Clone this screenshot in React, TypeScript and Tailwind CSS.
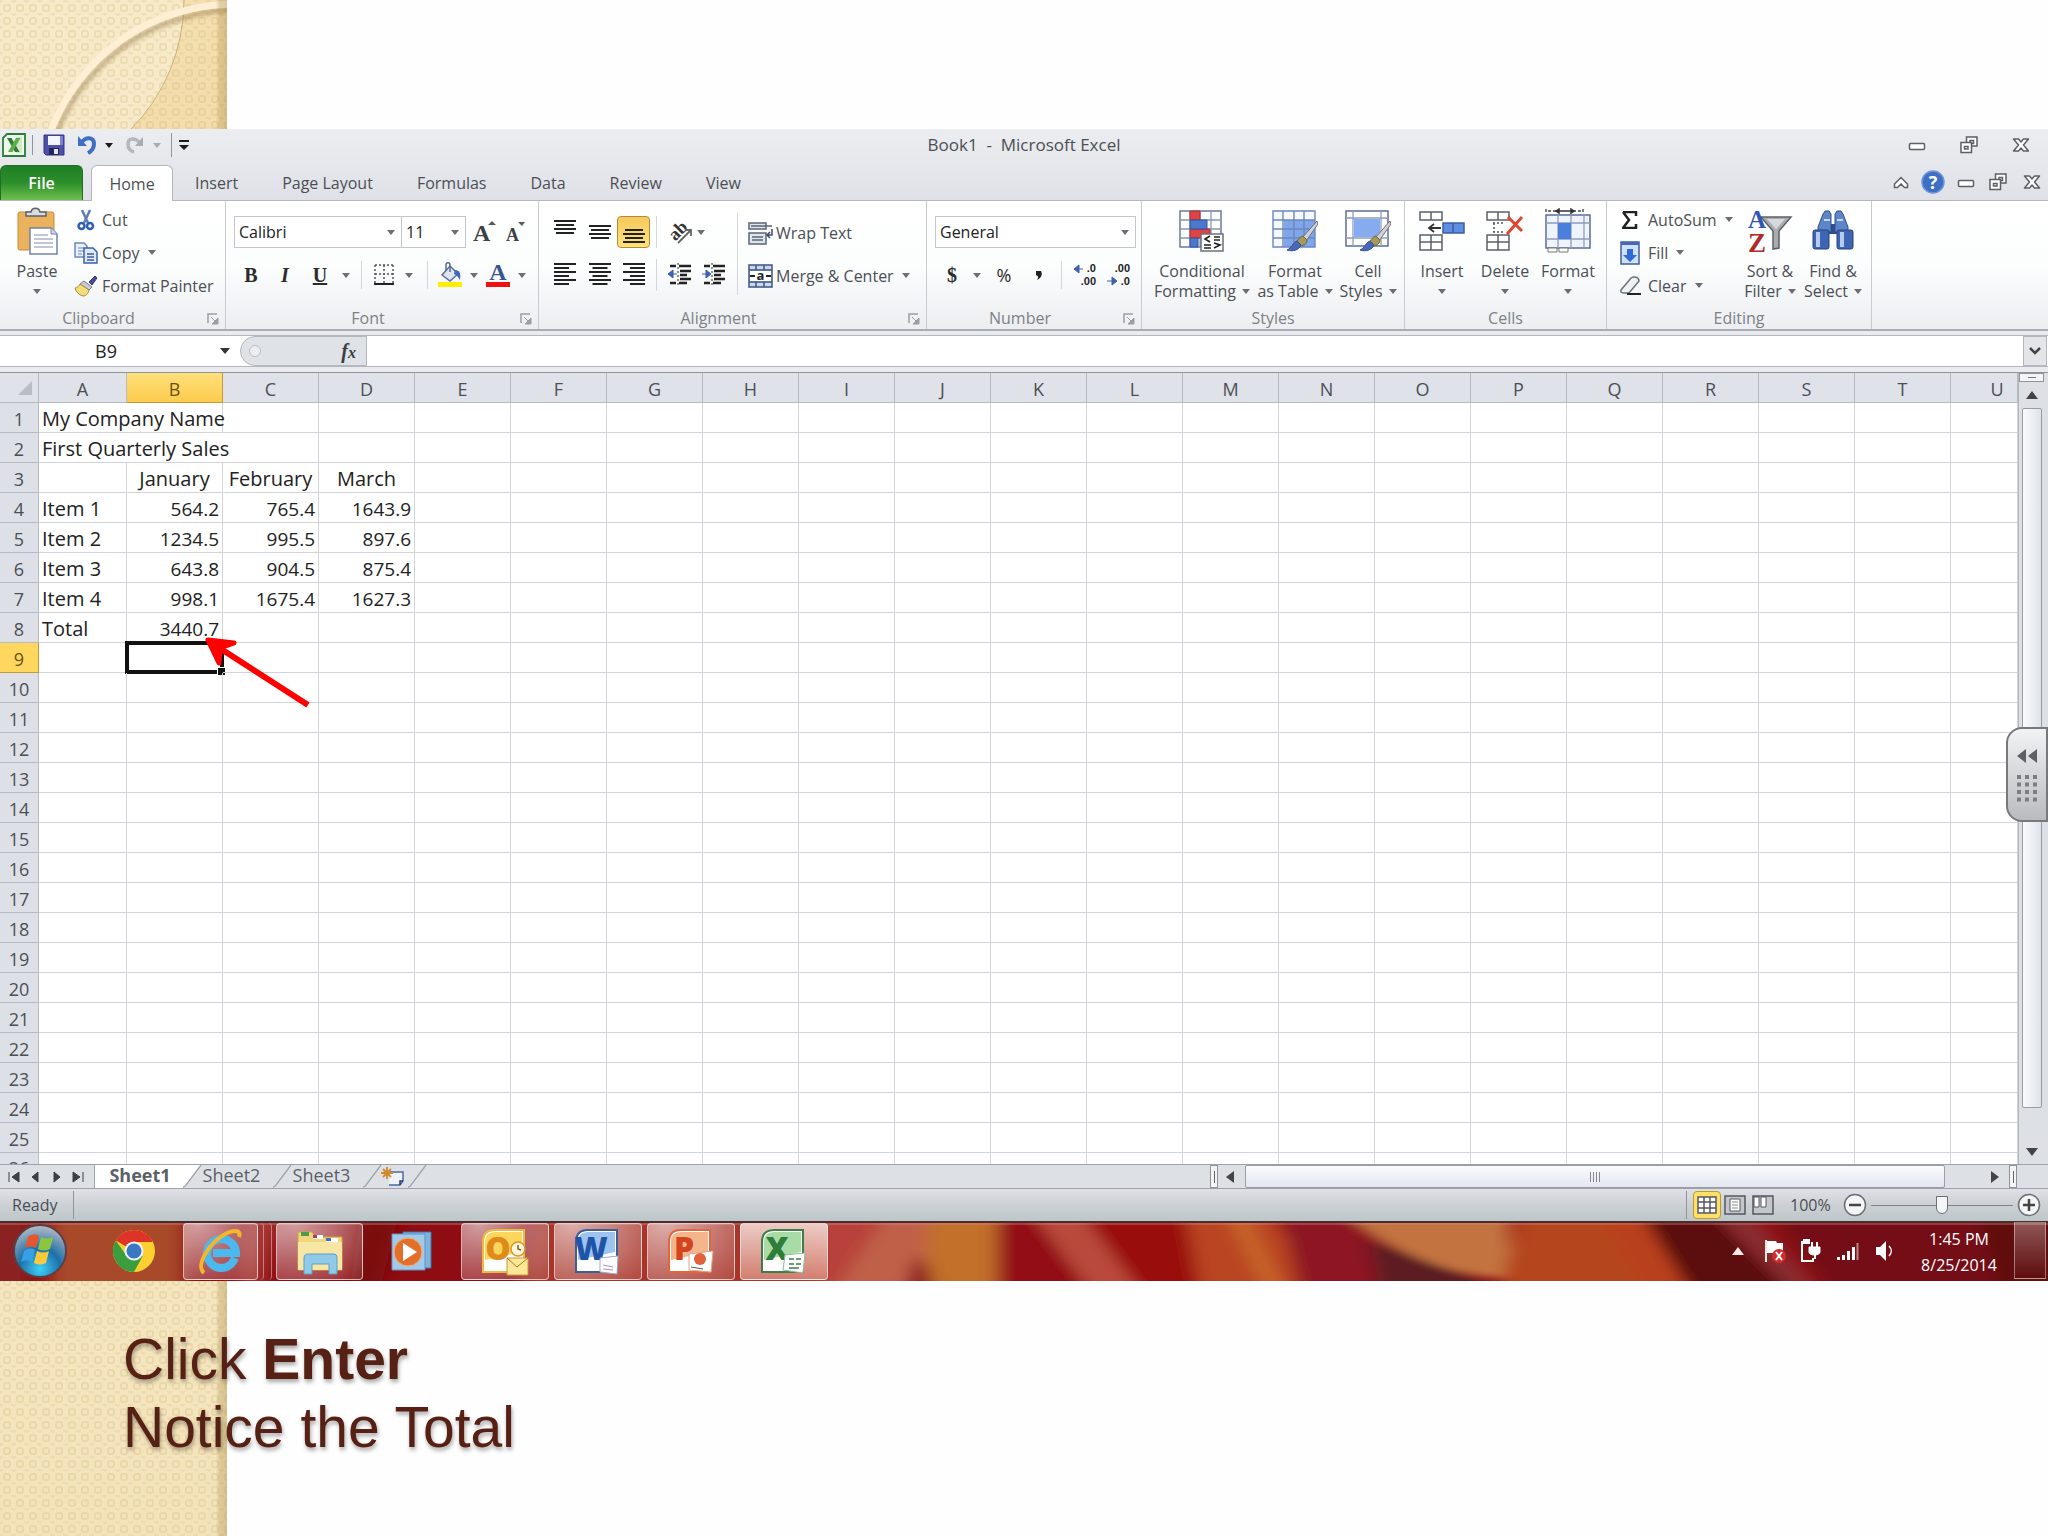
import type { ReactNode } from "react";
import clsx from "clsx";

const columns = "ABCDEFGHIJKLMNOPQRSTU".split("");
const tabs = ["Insert", "Page Layout", "Formulas", "Data", "Review", "View"];

interface CellData {
  text: string;
  span?: number;
  align?: "left" | "center" | "right";
}

const num = (text: string): CellData => ({ text, align: "right" });
const mid = (text: string): CellData => ({ text, align: "center" });

const sheet: Record<number, CellData[]> = {
  1: [{ text: "My Company Name", span: 2 }],
  2: [{ text: "First Quarterly Sales", span: 3 }],
  3: [{ text: "" }, mid("January"), mid("February"), mid("March")],
  4: [{ text: "Item 1" }, num("564.2"), num("765.4"), num("1643.9")],
  5: [{ text: "Item 2" }, num("1234.5"), num("995.5"), num("897.6")],
  6: [{ text: "Item 3" }, num("643.8"), num("904.5"), num("875.4")],
  7: [{ text: "Item 4" }, num("998.1"), num("1675.4"), num("1627.3")],
  8: [{ text: "Total" }, num("3440.7")],
};

function Caret({ className = "text-[#6b6f75]" }: { className?: string }) {
  return (
    <svg viewBox="0 0 8 5" className={clsx("w-2 h-[5px] shrink-0", className)} aria-hidden="true">
      <path d="M0 0h8L4 5z" fill="currentColor" />
    </svg>
  );
}

function Sep({ className = "h-8", dark }: { className?: string; dark?: boolean }) {
  return <span className={clsx("w-px shrink-0", dark ? "bg-[#8f949c]" : "bg-[#d3d6db]", className)} />;
}

/* ---------- slide background ---------- */

function SlideStrip() {
  return (
    <svg className="absolute left-0 top-0 h-full w-[227px]" aria-hidden="true">
      <defs>
        <pattern id="weave" width="13" height="13" patternUnits="userSpaceOnUse">
          <rect x="4" y="5" width="6" height="6" rx="2" fill="none" stroke="#c9a860" strokeOpacity=".22" strokeWidth="2" />
          <path d="M0 1h3M11 1h2M1 0v3" stroke="#c9a860" strokeOpacity=".15" strokeWidth="2" />
        </pattern>
        <linearGradient id="strip" x1="0" x2="0" y1="0" y2="1">
          <stop offset="0" stopColor="#f3dfb0" />
          <stop offset=".1" stopColor="#f4dcab" />
          <stop offset=".85" stopColor="#f5e6c0" />
          <stop offset="1" stopColor="#f3e3bb" />
        </linearGradient>
        <linearGradient id="stripEdge" x1="0" x2="1">
          <stop offset="0" stopColor="#a98a45" stopOpacity="0" />
          <stop offset=".3" stopColor="#a98a45" stopOpacity=".3" />
          <stop offset="1" stopColor="#a98a45" stopOpacity=".36" />
        </linearGradient>
        <filter id="soft" x="-10%" y="-10%" width="120%" height="120%">
          <feGaussianBlur stdDeviation="2" />
        </filter>
      </defs>
      <rect width="227" height="100%" fill="url(#strip)" />
      <circle cx="0" cy="0" r="184" fill="#f8ecd0" fillOpacity=".8" stroke="#c9b27c" strokeWidth="1" />
      <rect width="227" height="100%" fill="url(#weave)" />
      <circle cx="237" cy="204" r="194" fill="none" stroke="#8f7340" strokeOpacity=".5" strokeWidth="5" filter="url(#soft)" />
      <circle cx="235" cy="201" r="197" fill="none" stroke="#fdeed4" strokeWidth="7" />
      <rect x="216" width="11" height="100%" fill="url(#stripEdge)" />
    </svg>
  );
}

/* ---------- window chrome ---------- */

function MinimizeIcon() {
  return (
    <svg viewBox="0 0 18 18" className="size-[18px]">
      <rect x="1.5" y="7.5" width="15" height="6" rx="1" fill="#fff" stroke="#5b5f66" strokeWidth="1.5" />
    </svg>
  );
}

function RestoreIcon() {
  return (
    <svg viewBox="0 0 18 18" className="size-[18px]" fill="#fff" stroke="#5b5f66" strokeWidth="1.5">
      <path d="M6.500 1h10.500v9h-10.500z" />
      <path d="M10 4.500h3.500v3h-3.500z" />
      <path d="M1 6.500h10.500v10h-10.500z" />
      <path d="M4.500 10.500h3.500v2.500h-3.500z" />
    </svg>
  );
}

function CloseIcon() {
  return (
    <svg viewBox="0 0 18 18" className="size-[18px]">
      <path
        d="M1.500 3h5L9 6l2.500-3h5l-5 6 5 6h-5L9 12l-2.500 3h-5l5-6z"
        fill="#fff"
        stroke="#5b5f66"
        strokeWidth="1.5"
        strokeLinejoin="round"
      />
    </svg>
  );
}

function TitleBar() {
  return (
    <div className="relative flex h-9 items-center pb-1">
      <svg viewBox="0 0 24 24" className="ml-[2px] h-6 w-6" aria-hidden="true">
        <path d="M1 5l4-4h18v22H1z" fill="#eef7ea" stroke="#2c7d3a" strokeWidth="1.800" />
        <rect x="14" y="4" width="6" height="16" fill="#cfe8c6" />
        <path d="M5 5h4.500l8 14H13z" fill="#2e7d36" />
        <path d="M14 5h4.500l-8 14H6z" fill="#5fae4a" />
      </svg>
      <Sep dark className="ml-[6px] h-5" />
      <button aria-label="Save" className="ml-[10px]">
        <svg viewBox="0 0 22 22" className="size-[22px]">
          <path d="M1 1h20v20H3l-2-2z" fill="#4d4fa8" stroke="#34357d" />
          <path d="M5 2h12v9H5z" fill="#f3f6fd" />
          <path d="M17 2h3v9h-3z" fill="#7d80cf" />
          <path d="M6 14h10v7H6z" fill="#23245e" />
          <path d="M11 15h4v5h-4z" fill="#e4e7f5" />
        </svg>
      </button>
      <button aria-label="Undo" className="ml-3 flex items-center gap-2">
        <svg viewBox="0 0 20 22" className="h-[22px] w-5">
          <path d="M4 9c5-7 13-6 13 1 0 4-2 7-6 9" fill="none" stroke="#3f6fc4" strokeWidth="4" />
          <path d="M1 2v10h9z" fill="#3f6fc4" />
        </svg>
        <Caret className="text-[#1b1b1b]" />
      </button>
      <button aria-label="Redo" className="ml-3 flex items-center gap-2">
        <svg viewBox="0 0 20 22" className="h-[22px] w-5">
          <path d="M15 9C10 3 3 4 3 10c0 4 2 7 6 8" fill="none" stroke="#b4b7bc" strokeWidth="3.500" />
          <path d="M18 3v9h-8z" fill="#a9acb1" />
        </svg>
        <Caret className="text-[#a9acb1]" />
      </button>
      <Sep dark className="ml-[10px] h-6" />
      <button aria-label="Customize Quick Access Toolbar" className="ml-[6px]">
        <svg viewBox="0 0 12 12" className="size-3">
          <path d="M1 1h10v2H1zM1 6h10l-5 5z" fill="#1b1b1b" />
        </svg>
      </button>
      <h1 className="pointer-events-none absolute inset-x-0 text-center text-[17px] whitespace-pre text-[#4b4f55]">
        Book1  -  Microsoft Excel
      </h1>
      <div className="ml-auto flex items-center gap-[34px] pr-[18px]">
        <button aria-label="Minimize"><MinimizeIcon /></button>
        <button aria-label="Restore"><RestoreIcon /></button>
        <button aria-label="Close"><CloseIcon /></button>
      </div>
    </div>
  );
}

function TabBar() {
  return (
    <nav className="flex h-9 items-end border-b border-[#b4b8be] text-base text-[#4b4f55]">
      <button className="h-[35px] w-[83px] rounded-t-md border border-b-0 border-[#1f6e22] bg-linear-to-b from-[#1f7f25] via-[#2c8f2b] to-[#6cc04e] font-semibold text-white">
        File
      </button>
      <button className="relative top-px ml-2 h-9 w-[82px] rounded-t-md border border-b-0 border-[#b4b8be] bg-white">
        Home
      </button>
      {tabs.map((tab) => (
        <button key={tab} className="h-[35px] px-[22px]">
          {tab}
        </button>
      ))}
      <div className="ml-auto flex h-full items-center pr-[7px] pb-[2px]">
        <button aria-label="Minimize the Ribbon">
          <svg viewBox="0 0 16 14" className="h-[14px] w-4">
            <path d="M1.500 9L8 2.500 14.500 9v3.500h-3L8 9l-3.500 3.500h-3z" fill="#fff" stroke="#5b5f66" strokeWidth="1.500" />
          </svg>
        </button>
        <button aria-label="Help" className="ml-3">
          <svg viewBox="0 0 24 24" className="size-6">
            <circle cx="12" cy="12" r="11" fill="#3d6fc2" stroke="#6d97da" strokeWidth="1.500" />
            <text x="12" y="18.500" textAnchor="middle" fontSize="18" fontWeight="700" fill="#fff">?</text>
          </svg>
        </button>
        <button aria-label="Minimize Window" className="ml-3"><MinimizeIcon /></button>
        <button aria-label="Restore Window" className="ml-[14px]"><RestoreIcon /></button>
        <button aria-label="Close Window" className="ml-4"><CloseIcon /></button>
      </div>
    </nav>
  );
}

/* ---------- ribbon ---------- */

interface GroupProps {
  label: string;
  className: string;
  inset?: string;
  launcher?: boolean;
  children: ReactNode;
}

function Group({ label, className, inset, launcher, children }: GroupProps) {
  return (
    <section className={clsx("flex shrink-0 flex-col border-r border-[#c8ccd2]", className)}>
      <div className={clsx("flex h-[103px]", inset)}>{children}</div>
      <div className={clsx("relative flex h-[25px] items-center justify-center pt-[2px] text-base text-[#7d8188]", launcher && "pr-7")}>
        {label}
        {launcher && (
          <button aria-label={`${label} settings`} className="absolute right-[6px] bottom-1">
            <svg viewBox="0 0 12 12" className="size-3">
              <path d="M1 10V1h9" fill="none" stroke="#9a9ea5" strokeWidth="1.500" />
              <path d="M4 4l4 4M11 5v6H5z" fill="#9a9ea5" stroke="#9a9ea5" />
            </svg>
          </button>
        )}
      </div>
    </section>
  );
}

interface SmallButtonProps {
  icon: ReactNode;
  label: string;
  menu?: boolean;
}

function SmallButton({ icon, label, menu }: SmallButtonProps) {
  return (
    <button className="flex h-[33px] items-center whitespace-nowrap">
      <span className="flex w-7 justify-start">{icon}</span>
      {label}
      {menu && <span className="pl-2"><Caret /></span>}
    </button>
  );
}

interface BigButtonProps {
  icon: ReactNode;
  lines: string[];
  className: string;
}

// A single-line label keeps its arrow on the second line.
function BigButton({ icon, lines, className }: BigButtonProps) {
  return (
    <button className={clsx("flex flex-col items-center whitespace-nowrap", className)}>
      <span className="flex h-[60px] items-center">{icon}</span>
      <span className="leading-5">{lines[0]}</span>
      <span className="flex h-5 items-center gap-[6px]">
        {lines[1]}
        <Caret />
      </span>
    </button>
  );
}

interface PickerProps {
  label: string;
  value: string;
  className: string;
}

function Picker({ label, value, className }: PickerProps) {
  return (
    <label className={clsx("relative flex items-center", className)}>
      <span className="sr-only">{label}</span>
      <select className="h-8 w-full appearance-none border border-[#c3c7cd] bg-white pl-1 text-[#222]">
        <option>{value}</option>
      </select>
      <span className="pointer-events-none absolute right-[7px]"><Caret /></span>
    </label>
  );
}

function Tool({ label, className, children }: { label: string; className: string; children: ReactNode }) {
  return (
    <button aria-label={label} title={label} className={clsx("flex h-8 shrink-0 items-center justify-center", className)}>
      {children}
    </button>
  );
}

const PasteIcon = (
  <svg viewBox="0 0 42 48" className="h-12 w-[42px]">
    <rect x="2" y="5" width="36" height="38" rx="2" fill="#eab25c" stroke="#c58b39" />
    <path d="M10 9V5h5c1-5 8-5 9 0h6v4z" fill="#d9dce1" stroke="#5d6168" strokeWidth="1.500" />
    <path d="M14 21h21l6 6v20H14z" fill="#fff" stroke="#7383a8" strokeWidth="1.500" />
    <path d="M35 21v6h6" fill="#cfd8ee" stroke="#7383a8" />
    <path d="M18 28h14M18 32h19M18 36h19M18 40h19" stroke="#a9b4cc" strokeWidth="1.500" />
  </svg>
);

const CutIcon = (
  <svg viewBox="0 0 22 22" className="ml-[3px] size-[22px]">
    <path d="M5 1l6 13M13 1L7 14" stroke="#5d7fae" strokeWidth="2.500" />
    <circle cx="4.500" cy="17" r="3" fill="none" stroke="#2f5fb0" strokeWidth="2.500" />
    <circle cx="13" cy="17" r="3" fill="none" stroke="#2f5fb0" strokeWidth="2.500" />
  </svg>
);

const CopyIcon = (
  <svg viewBox="0 0 24 22" className="h-[22px] w-6">
    <path d="M1 1h9l3 3v11H1z" fill="#e9f0fb" stroke="#6b87bb" strokeWidth="1.500" />
    <path d="M4 6h6M4 9h6M4 12h4" stroke="#6b87bb" />
    <path d="M10 6h9l4 4v11H10z" fill="#dfe9fa" stroke="#3c62a8" strokeWidth="1.500" />
    <path d="M13 12h7M13 15h7M13 18h7" stroke="#3c62a8" strokeWidth="1.300" />
  </svg>
);

const PainterIcon = (
  <svg viewBox="0 0 24 22" className="h-[22px] w-6">
    <path d="M15 7l6-6 2 2-5 7z" fill="#4b4d92" stroke="#33346b" />
    <path d="M10 6l8 6-3 3-9-6z" fill="#c9ccd3" stroke="#777c85" />
    <path d="M6 9l9 6c-1 4-3 6-6 6-4-1-7-4-8-8 2 0 4-2 5-4z" fill="#f2dc7c" stroke="#a8913a" />
  </svg>
);

function BarLines({ widths, top = 0, align = "center" }: { widths: number[]; top?: number; align?: "start" | "center" | "end" }) {
  return (
    <svg viewBox="0 0 22 24" className="h-6 w-[22px]">
      {widths.map((w, i) => (
        <rect
          key={i}
          x={align === "start" ? 0 : align === "end" ? 22 - w : (22 - w) / 2}
          y={top + i * 4}
          width={w}
          height="2"
          fill="#222"
        />
      ))}
    </svg>
  );
}

function IndentIcon({ flip }: { flip?: boolean }) {
  return (
    <svg viewBox="0 0 24 24" className="h-6 w-6">
      <path d="M2 3h6M11 3h12M12 8h11M12 12h7M12 16h11M2 20h6M11 20h8" stroke="#222" strokeWidth="2.500" />
      <path d="M10 0v24" stroke="#222" strokeDasharray="2 2" />
      <path d={flip ? "M0 11h4M4 7l5 4-5 4z" : "M9 11H5M5 7l-5 4 5 4z"} fill="#3f5fb0" stroke="#3f5fb0" />
    </svg>
  );
}

const brush = (
  <g>
    <path d="M45 12L30 29l4 3 12-17z" fill="#cfd2d6" stroke="#70747a" />
    <path d="M31 27c-3 1-5 3-6 6l4 4c4-1 6-3 6-6z" fill="#a59a5a" stroke="#6d6638" />
    <path d="M25 32c-4 1-5 7-10 9 6 2 12 0 14-5z" fill="#4a68b5" stroke="#34508f" />
  </g>
);

const ConditionalIcon = (
  <svg viewBox="0 0 46 44" className="h-11 w-[46px]">
    <path d="M1 2h41v36H1z" fill="#fff" stroke="#6b7a99" strokeWidth="1.500" />
    <path d="M1 11h41M1 20h41M1 29h41M11 2v36M21 2v36M32 2v36" stroke="#8797b8" strokeWidth="1.300" />
    <path d="M11 2h10v9H11zM11 20h20v9H11z" fill="#df4343" stroke="#a82f2f" />
    <path d="M11 11h17v9H11zM11 29h8v9h-8z" fill="#4a78cf" stroke="#2f529b" />
    <path d="M22 25h22v17H22z" fill="#fff" stroke="#6b7079" strokeWidth="1.500" />
    <path d="M31 27l-5 3 5 3M25 36h7M25 39h7M35 28h6M35 31h6M35 34l6 2-6 3" fill="none" stroke="#222" strokeWidth="1.600" />
  </svg>
);

const TableIcon = (
  <svg viewBox="0 0 46 44" className="h-11 w-[46px]">
    <path d="M1 2h42v36H1z" fill="#f5f8fe" />
    <path d="M12 11h31v27H12z" fill="#7fa5ea" />
    <path d="M1 2h42v36H1zM1 11h42M1 20h42M1 29h42M11 2v36M22 2v36M32 2v36" fill="none" stroke="#6c87bd" strokeWidth="1.400" />
    {brush}
  </svg>
);

const CellStylesIcon = (
  <svg viewBox="0 0 46 44" className="h-11 w-[46px]">
    <path d="M1 2h42v35H1z" fill="#fff" stroke="#5d6f95" strokeWidth="1.500" />
    <path d="M1 9h42M1 29h42M8 2v35M36 2v35" stroke="#8e9dbd" strokeWidth="1.300" />
    <path d="M9 10h26v18H9z" fill="#86abee" />
    {brush}
  </svg>
);

const InsertIcon = (
  <svg viewBox="0 0 46 44" className="h-11 w-[46px]">
    <path d="M1 3h22v8H1zM12 3v8M1 26h22v15H1zM12 26v15M1 33h22" fill="#fff" stroke="#5b606b" strokeWidth="1.500" />
    <path d="M24 14h21v10H24zM34 14v10" fill="#5f8ee0" stroke="#3b5ea8" strokeWidth="1.500" />
    <path d="M10 19h12M15 15l-5 4 5 4" fill="none" stroke="#333" strokeWidth="1.800" />
  </svg>
);

const DeleteIcon = (
  <svg viewBox="0 0 46 44" className="h-11 w-[46px]">
    <path d="M5 3h22v8H5zM16 3v8M5 26h22v15H5zM16 26v15M5 33h22" fill="#fff" stroke="#5b606b" strokeWidth="1.500" />
    <path d="M11 14h12M11 23h12M12 14v9" stroke="#555" strokeWidth="1.500" strokeDasharray="2 2" />
    <path d="M26 8l14 14M40 8L25 25" stroke="#e2452f" strokeWidth="3" />
  </svg>
);

const FormatIcon = (
  <svg viewBox="0 0 46 46" className="h-[46px] w-[46px]">
    <path d="M1 1v4M38 1v4M3 3h8M28 3h8" stroke="#444" strokeWidth="1.400" strokeDasharray="3 2" />
    <path d="M12 3h16M14 1l-3 2 3 2zM26 1l3 2-3 2z" stroke="#333" strokeWidth="1.500" />
    <path d="M1 7h44v33H1z" fill="#eef3fc" stroke="#5d6f95" strokeWidth="1.500" />
    <path d="M1 15h44M1 31h44M13 7v33M26 7v33M39 7v33" stroke="#8e9dbd" strokeWidth="1.300" />
    <path d="M13 15h13v16H13z" fill="#4a7fdd" />
    <path d="M3 40h9v4H3zM14 40h9v4h-9z" fill="#fff" stroke="#777" />
  </svg>
);

const SortIcon = (
  <svg viewBox="0 0 44 46" className="h-[46px] w-11 overflow-visible">
    <path d="M13 9h30L31 23v17l-6 1V23z" fill="#a9adb2" stroke="#5d6167" strokeWidth="1.500" />
    <path d="M19 11h18l-9 10z" fill="#d6d9dc" />
    <text x="0" y="20" fontSize="25" fontWeight="700" fill="#2f55b5" className="font-['Liberation_Serif',serif]">A</text>
    <text x="0" y="44" fontSize="27" fontWeight="700" fill="#b02a2a" className="font-['Liberation_Serif',serif]">Z</text>
  </svg>
);

const FindIcon = (
  <svg viewBox="0 0 42 42" className="h-[42px] w-[42px]">
    <path d="M17 14h8v10h-8z" fill="#2f4f8c" />
    {[0, 24].map((x) => (
      <g key={x}>
        <path d={x ? "M23 4l2-3h4l2 3 5 13v5H23z" : "M6 22v-5l5-13 2-3h4l2 3v18z"} fill="#5f85c9" stroke="#2f4f8c" />
        <rect x={x + 1} y="20" width="16" height="19" rx="2" fill="#3c66b4" stroke="#24437c" />
        <rect x={x + 4} y="22" width="4" height="15" fill="#b7cbee" />
      </g>
    ))}
    <path d="M12 10h6M25 10h6" stroke="#c5d5f2" strokeWidth="2" />
  </svg>
);

function Ribbon() {
  return (
    <div className="flex border-b-2 border-[#a9adb4] bg-linear-to-b from-white via-[#fcfdfd] to-[#eceef1] text-base text-[#4b4f55]">
      <Group label="Clipboard" className="w-[226px]" launcher>
        <BigButton icon={PasteIcon} lines={["Paste"]} className="w-[74px]" />
        <div className="flex flex-col items-start pt-[2px]">
          <SmallButton icon={CutIcon} label="Cut" />
          <SmallButton icon={CopyIcon} label="Copy" menu />
          <SmallButton icon={PainterIcon} label="Format Painter" />
        </div>
      </Group>

      <Group label="Font" className="w-[313px]" launcher>
        <div className="flex flex-col gap-[11px] pt-[15px] pl-2">
          <div className="flex">
            <Picker label="Font" value="Calibri" className="w-[168px]" />
            <Picker label="Font size" value="11" className="-ml-px w-[65px]" />
            <Tool label="Grow font" className="ml-[6px] w-[26px]">
              <svg viewBox="0 0 24 24" className="size-6 overflow-visible">
                <text x="0" y="21" fontSize="24" fontWeight="700" fill="#3b3f46" className="font-['Liberation_Serif',serif]">A</text>
                <path d="M15 5l4-4 4 4z" fill="#555a62" />
              </svg>
            </Tool>
            <Tool label="Shrink font" className="ml-[6px] w-[26px]">
              <svg viewBox="0 0 24 24" className="size-6 overflow-visible">
                <text x="1" y="21" fontSize="18" fontWeight="700" fill="#3b3f46" className="font-['Liberation_Serif',serif]">A</text>
                <path d="M13 2h7l-3 4z" fill="#555a62" />
              </svg>
            </Tool>
          </div>
          <div className="flex items-center font-['Liberation_Serif',serif] text-xl font-bold text-[#2b2b2b]">
            <Tool label="Bold" className="w-[34px]">B</Tool>
            <Tool label="Italic" className="w-[34px]"><i>I</i></Tool>
            <Tool label="Underline" className="w-9"><u>U</u></Tool>
            <Tool label="Underline style" className="w-4"><Caret /></Tool>
            <Sep className="mx-[7px] h-7" />
            <Tool label="Borders" className="w-[30px]">
              <svg viewBox="0 0 20 22" className="h-[22px] w-5">
                <path d="M1 1h18M1 10h18M1 1v18M10 1v18M19 1v18" stroke="#555" strokeWidth="1.500" strokeDasharray="2 2" />
                <path d="M0 20h20" stroke="#222" strokeWidth="2" />
              </svg>
            </Tool>
            <Tool label="Border style" className="w-5"><Caret /></Tool>
            <Sep className="mx-2 h-7" />
            <Tool label="Fill color" className="w-7">
              <svg viewBox="0 0 24 26" className="h-[26px] w-6">
                <path d="M12 4l8 8-8 7-8-6z" fill="#dfe6f2" stroke="#5a6f99" strokeWidth="1.500" />
                <path d="M8 9V3c0-3 4-3 4 0v7" fill="none" stroke="#5a6f99" strokeWidth="1.500" />
                <path d="M17 8c5 0 6 4 5 10-2-3-3-5-6-6z" fill="#3f68b8" />
                <path d="M0 20h24v5H0z" fill="#ffee00" />
              </svg>
            </Tool>
            <Tool label="Fill colors" className="w-5"><Caret /></Tool>
            <Tool label="Font color" className="w-7">
              <svg viewBox="0 0 24 26" className="h-[26px] w-6 overflow-visible">
                <text x="12" y="18" textAnchor="middle" fontSize="24" fontWeight="700" fill="#3a5596" className="font-['Liberation_Serif',serif]">A</text>
                <path d="M0 20h24v5H0z" fill="#ee1111" />
              </svg>
            </Tool>
            <Tool label="Font colors" className="w-5"><Caret /></Tool>
          </div>
        </div>
      </Group>

      <Group label="Alignment" className="w-[388px]" launcher>
        <div className="flex flex-col gap-[11px] pt-[15px] pl-2">
          <div className="flex items-center">
            <Tool label="Top align" className="w-[35px]"><BarLines widths={[22, 18, 22, 18]} /></Tool>
            <Tool label="Middle align" className="w-[35px]"><BarLines widths={[22, 18, 22, 18]} top={5} /></Tool>
            <Tool label="Bottom align" className="w-[33px] rounded border border-[#b08a35] bg-linear-to-b from-[#f6c95c] to-[#ffe27a]">
              <BarLines widths={[18, 22, 18, 22]} top={9} />
            </Tool>
            <Sep className="mx-[6px] h-8" />
            <Tool label="Orientation" className="w-12 gap-1">
              <svg viewBox="0 0 24 24" className="size-6 overflow-visible">
                <text x="1" y="17" fontSize="18" fontWeight="700" fill="#333" transform="rotate(-45 9 13)" className="font-['Liberation_Serif',serif]">ab</text>
                <path d="M9 23L21 11M16 10l6 0 0 6" fill="none" stroke="#666" strokeWidth="1.800" />
              </svg>
              <Caret />
            </Tool>
          </div>
          <div className="flex items-center">
            <Tool label="Align left" className="w-[35px]"><BarLines widths={[22, 15, 22, 15, 22, 15]} align="start" /></Tool>
            <Tool label="Center" className="w-[35px]"><BarLines widths={[22, 15, 22, 15, 22, 15]} /></Tool>
            <Tool label="Align right" className="w-[33px]"><BarLines widths={[22, 15, 22, 15, 22, 15]} align="end" /></Tool>
            <Sep className="mx-[6px] h-8" />
            <Tool label="Decrease indent" className="w-[34px]"><IndentIcon /></Tool>
            <Tool label="Increase indent" className="w-[34px]"><IndentIcon flip /></Tool>
          </div>
        </div>
        <Sep className="mt-3 ml-[6px] h-[82px]" />
        <div className="flex flex-col gap-[10px] pt-[15px] pl-[10px]">
          <SmallButton
            label="Wrap Text"
            icon={
              <svg viewBox="0 0 25 24" className="h-6 w-[25px]">
                <path d="M1 2h17v6H1zM1 12h17v11H1z" fill="#dfe5ef" stroke="#5c6677" strokeWidth="1.500" />
                <path d="M3 5h21M4 16h11M4 19h11" stroke="#5c6677" strokeWidth="1.500" />
                <path d="M24 8v6h-4M22 11l-3 3 3 3" fill="none" stroke="#3c4c70" strokeWidth="1.500" />
              </svg>
            }
          />
          <SmallButton
            label="Merge & Center"
            menu
            icon={
              <svg viewBox="0 0 25 24" className="h-6 w-[25px]">
                <path d="M1 1h23v22H1zM1 6h23M1 18h23M8 1v5M16 1v5M8 18v5M16 18v5" fill="#c9d6ee" stroke="#3f547f" strokeWidth="1.500" />
                <path d="M2 7h21v10H2z" fill="#fff" />
                <path d="M2 12h5M18 12h5" stroke="#222" strokeWidth="2" />
                <text x="12.500" y="16" textAnchor="middle" fontSize="13" fontWeight="700" fill="#222">a</text>
              </svg>
            }
          />
        </div>
      </Group>

      <Group label="Number" className="w-[215px]" launcher>
        <div className="flex flex-col gap-[11px] pt-[15px] pl-2">
          <Picker label="Number format" value="General" className="w-[201px]" />
          <div className="flex items-center text-[#2b2b2b]">
            <Tool label="Accounting format" className="w-[34px] font-['Liberation_Serif',serif] text-xl font-bold">$</Tool>
            <Tool label="Currencies" className="w-4"><Caret /></Tool>
            <Tool label="Percent" className="w-[38px] text-lg">%</Tool>
            <Tool label="Comma" className="w-8">
              <svg viewBox="0 0 8 10" className="h-[10px] w-2">
                <path d="M1 1h5c2 4 0 7-4 9 2-3 1-4-1-5z" fill="#222" />
              </svg>
            </Tool>
            <Sep className="mx-[6px] h-7" />
            <Tool label="Increase decimal" className="w-[34px]">
              <svg viewBox="0 0 24 24" className="size-6 overflow-visible font-['Liberation_Sans',sans-serif]" fill="#222" fontSize="11" fontWeight="700">
                <text x="23" y="9" textAnchor="end">.0</text>
                <text x="23" y="22" textAnchor="end">.00</text>
                <path d="M10 6H5M6 2L1 6l5 4z" fill="#3f5fb0" stroke="#3f5fb0" />
              </svg>
            </Tool>
            <Tool label="Decrease decimal" className="w-[34px]">
              <svg viewBox="0 0 24 24" className="size-6 overflow-visible font-['Liberation_Sans',sans-serif]" fill="#222" fontSize="11" fontWeight="700">
                <text x="23" y="9" textAnchor="end">.00</text>
                <text x="23" y="22" textAnchor="end">.0</text>
                <path d="M0 18h5M5 14l5 4-5 4z" fill="#3f5fb0" stroke="#3f5fb0" />
              </svg>
            </Tool>
          </div>
        </div>
      </Group>

      <Group label="Styles" className="w-[263px]" inset="pl-2">
        <BigButton icon={ConditionalIcon} lines={["Conditional", "Formatting"]} className="w-[104px]" />
        <BigButton icon={TableIcon} lines={["Format", "as Table"]} className="w-[82px]" />
        <BigButton icon={CellStylesIcon} lines={["Cell", "Styles"]} className="w-16" />
      </Group>

      <Group label="Cells" className="w-[202px]" inset="pl-[6px]">
        <BigButton icon={InsertIcon} lines={["Insert"]} className="w-[62px]" />
        <BigButton icon={DeleteIcon} lines={["Delete"]} className="w-16" />
        <BigButton icon={FormatIcon} lines={["Format"]} className="w-[62px]" />
      </Group>

      <Group label="Editing" className="w-[265px]" inset="pl-[13px]">
        <div className="flex w-[120px] flex-col items-start pt-[2px]">
          <SmallButton
            label="AutoSum"
            menu
            icon={
              <svg viewBox="0 0 16 18" className="ml-[2px] h-[18px] w-4">
                <path d="M1 1h13v4M1 1l6 8-6 8h13v-4" fill="none" stroke="#222" strokeWidth="2.500" />
              </svg>
            }
          />
          <SmallButton
            label="Fill"
            menu
            icon={
              <svg viewBox="0 0 20 24" className="h-6 w-5">
                <path d="M1 1h18v22H1z" fill="#cfe0fa" stroke="#3f5f9f" strokeWidth="1.500" />
                <path d="M1 1h18v3H1z" fill="#4a69ad" />
                <path d="M7 8h6v6h4l-7 7-7-7h4z" fill="#2f6bd8" />
              </svg>
            }
          />
          <SmallButton
            label="Clear"
            menu
            icon={
              <svg viewBox="0 0 22 20" className="h-5 w-[22px]">
                <path d="M1 14L11 2c3-2 8-1 8 3L9 17H4c-2 0-4-1-3-3z" fill="#eef1f6" stroke="#6b717c" strokeWidth="1.500" />
                <path d="M7 18h14" stroke="#222" strokeWidth="2" />
              </svg>
            }
          />
        </div>
        <BigButton icon={SortIcon} lines={["Sort &", "Filter"]} className="w-[60px]" />
        <BigButton icon={FindIcon} lines={["Find &", "Select"]} className="w-[66px]" />
      </Group>
    </div>
  );
}

/* ---------- formula bar and grid ---------- */

function FormulaBar() {
  return (
    <div className="flex h-[42px] items-start border-b border-[#8f949c] bg-[#e9ebee] pt-1">
      <div className="flex h-8 w-full border-y border-[#b4b8be] bg-white">
        <label className="flex w-[240px] items-center pr-[10px]">
          <span className="sr-only">Name Box</span>
          <input className="w-[220px] pr-2 text-center text-lg text-[#222] outline-none" defaultValue="B9" />
          <svg viewBox="0 0 10 6" className="h-[6px] w-[10px]"><path d="M0 0h10L5 6z" fill="#333" /></svg>
        </label>
        <div className="flex w-[127px] items-center justify-between rounded-l-full border border-[#b4b8be] bg-[#dfe2e7] pr-[10px] pl-2">
          <span className="size-3 rounded-full border border-[#b9bdc4] bg-[#eceef1]" />
          <button aria-label="Insert Function" className="font-['Liberation_Serif',serif] text-xl font-bold text-[#3a3d42] italic">
            f<span className="text-base">x</span>
          </button>
        </div>
        <input aria-label="Formula" className="min-w-0 flex-1 px-2 text-lg outline-none" />
        <button aria-label="Expand Formula Bar" className="mr-px flex w-6 items-center justify-center border border-[#b4b8be] bg-[#e3e5e9]">
          <svg viewBox="0 0 12 8" className="h-2 w-3"><path d="M1 1l5 5 5-5" fill="none" stroke="#444" strokeWidth="2.500" /></svg>
        </button>
      </div>
    </div>
  );
}

function SheetRow({ row }: { row: number }) {
  const cells = sheet[row] ?? [];
  const used = cells.reduce((n, c) => n + (c.span ?? 1), 0);
  const blanks = columns.slice(used);
  const active = row === 9;
  return (
    <tr>
      <th
        scope="row"
        className={clsx(
          "h-[30px] border-r border-b p-0 pt-[3px] text-center text-lg leading-[26px] font-normal",
          active ? "border-[#c39a3a] bg-[#ffd75e] text-[#6b5310]" : "border-[#b6bac1] bg-[#dde1e7] text-[#4b4f55]",
        )}
      >
        {row}
      </th>
      {cells.map((cell, i) => (
        <td
          key={i}
          colSpan={cell.span}
          className={clsx(
            "h-[30px] border-r border-b border-[#d3d3dc] px-[3px] pt-[3px] pb-0 leading-[26px] whitespace-nowrap",
            cell.align === "right" ? "text-right text-[19px]" : "text-xl leading-[26px]",
            cell.align === "center" && "text-center",
          )}
        >
          {cell.text}
        </td>
      ))}
      {blanks.map((col) => (
        <td key={col} className="relative h-[30px] border-r border-b border-[#d3d3dc] p-0">
          {active && col === "B" && (
            <span className="absolute -inset-[2px] border-4 border-[#111]">
              <span className="absolute -right-[6px] -bottom-[6px] size-[9px] border border-white bg-[#111]" />
            </span>
          )}
        </td>
      ))}
    </tr>
  );
}

function Grid() {
  return (
    <table className="w-full table-fixed border-separate border-spacing-0 bg-white text-[#222]">
      <colgroup>
        <col className="w-[39px]" />
        <col className="w-[88px]" />
        {columns.slice(1, -1).map((c) => (
          <col key={c} className="w-24" />
        ))}
        <col />
      </colgroup>
      <thead>
        <tr>
          <th className="h-[30px] border-r border-b border-[#b6bac1] bg-[#dfe2e8] p-0">
            <svg viewBox="0 0 14 14" className="ml-[18px] size-[14px]"><path d="M14 0v14H0z" fill="#b9bec6" /></svg>
          </th>
          {columns.map((c) => (
            <th
              key={c}
              scope="col"
              className={clsx(
                "h-[30px] overflow-hidden border-r border-b p-0 pt-[3px] text-lg leading-[26px] font-normal",
                c === "B" ? "border-[#c39a3a] bg-linear-to-b from-[#ffe07a] to-[#fbcb4c] text-[#6b5310]" : "border-[#b6bac1] bg-[#dfe2e8] text-[#4b4f55]",
              )}
            >
              {c === "U" ? <div className="w-[92px]">{c}</div> : c}
            </th>
          ))}
        </tr>
      </thead>
      <tbody>
        {Array.from({ length: 25 }, (_, i) => (
          <SheetRow key={i} row={i + 1} />
        ))}
        <tr>
          <th scope="row" className="border-r border-[#b6bac1] bg-[#dde1e7] p-0 text-lg leading-[30px] font-normal text-[#4b4f55]">
            <div className="h-[11px] overflow-hidden">26</div>
          </th>
          {columns.map((c) => (
            <td key={c} className="border-r border-[#d3d3dc] p-0" />
          ))}
        </tr>
      </tbody>
    </table>
  );
}

function VerticalScroll() {
  return (
    <div className="flex w-[30px] shrink-0 flex-col items-center border-l border-[#b4b8be] bg-[#dde1e5] pr-1">
      <div className="flex h-[9px] w-full items-center justify-center border border-[#8f949c] bg-[#f3f4f6]">
        <span className="h-px w-2 bg-[#777]" />
      </div>
      <button aria-label="Scroll up" className="flex h-[26px] items-center">
        <svg viewBox="0 0 12 8" className="h-2 w-3"><path d="M0 8h12L6 0z" fill="#444" /></svg>
      </button>
      <div className="w-5 flex-1 rounded-[2px] border border-[#989da6] bg-linear-to-r from-[#fafbfc] to-[#dfe3ea]" />
      <div className="flex h-[56px] items-end">
        <button aria-label="Scroll down" className="mb-2">
          <svg viewBox="0 0 12 8" className="h-2 w-3"><path d="M0 0h12L6 8z" fill="#444" /></svg>
        </button>
      </div>
    </div>
  );
}

function SheetArea() {
  return (
    <div className="relative flex">
      <div className="min-w-0 flex-1 overflow-hidden">
        <Grid />
      </div>
      <VerticalScroll />
      <svg viewBox="0 0 120 80" className="absolute top-[262px] left-[200px] h-20 w-[120px]" aria-hidden="true">
        <path d="M18 12L108 70" stroke="#fe0000" strokeWidth="6" />
        <path d="M8 5l26 3-14 5-1 15z" fill="#fe0000" stroke="#fe0000" strokeWidth="5" strokeLinejoin="round" />
      </svg>
      <button
        aria-label="Show panel"
        className="absolute top-[354px] right-0 flex h-[95px] w-[42px] flex-col items-center gap-3 rounded-l-2xl border-2 border-[#77797d] bg-linear-to-b from-[#f2f3f4] to-[#b9bbbf] pt-5"
      >
        <svg viewBox="0 0 20 14" className="h-[14px] w-5"><path d="M9 0v14L0 7zM20 0v14l-9-7z" fill="#5e6064" /></svg>
        <svg viewBox="0 0 20 27" className="h-[27px] w-5" fill="#7c7e82">
          {[0, 1, 2, 3].map((r) => [0, 1, 2].map((c) => <rect key={`${r}${c}`} x={c * 8} y={r * 7.5} width="4" height="4" />))}
        </svg>
      </button>
    </div>
  );
}

function SheetTabs() {
  return (
    <div className="flex h-[25px] border-y border-[#9da2aa] bg-[#dde1e5] text-lg leading-5 text-[#5b5f66]">
      <div className="flex w-[95px] items-center justify-between border-r border-[#9da2aa] pr-[10px] pl-2">
        {["M1 1v10M11 1v10L4 6z", "M9 1v10L3 6z", "M3 1v10l6-5z", "M11 1v10M1 1v10l7-5z"].map((d, i) => (
          <button key={d} aria-label={["First sheet", "Previous sheet", "Next sheet", "Last sheet"][i]}>
            <svg viewBox="0 0 12 12" className="size-3"><path d={d} fill="#3c3f45" stroke="#3c3f45" /></svg>
          </button>
        ))}
      </div>
      <button className="w-[88px] bg-white pb-1 pl-[2px] font-bold">Sheet1</button>
      <TabSlant fill="#fff" />
      <button className="w-[75px] pr-2 pb-1">Sheet2</button>
      <TabSlant fill="#dde1e5" />
      <button className="w-[75px] pr-2 pb-1">Sheet3</button>
      <TabSlant fill="#dde1e5" />
      <button aria-label="Insert Worksheet" className="flex w-[30px] items-center justify-center">
        <svg viewBox="0 0 24 20" className="h-5 w-6">
          <path d="M9 5h13v9l-3 4H8" fill="#eef3fb" stroke="#4b69a8" strokeWidth="1.500" />
          <path d="M19 18v-4h3" fill="none" stroke="#2b3d66" strokeWidth="1.500" />
          <path d="M6 0v12M0 6h12M2 2l8 8M10 2l-8 8" stroke="#d08a2c" strokeWidth="1.800" />
        </svg>
      </button>
      <TabSlant fill="#dde1e5" />
      <div className="ml-auto flex w-[807px] items-center">
        <span className="flex h-full w-2 items-center justify-center border border-[#8f949c] bg-[#f3f4f6]"><i className="h-3 w-px bg-[#666]" /></span>
        <button aria-label="Scroll left" className="w-[27px] pl-2">
          <svg viewBox="0 0 8 12" className="h-3 w-2"><path d="M8 0v12L0 6z" fill="#444" /></svg>
        </button>
        <div className="flex h-full flex-1 items-center justify-center gap-[2px] rounded-[2px] border border-[#989da6] bg-linear-to-b from-[#fafbfe] to-[#e3e6ef]">
          {[0, 1, 2, 3].map((n) => (
            <i key={n} className="h-[10px] w-px bg-[#888]" />
          ))}
        </div>
        <button aria-label="Scroll right" className="w-16 pl-[46px]">
          <svg viewBox="0 0 8 12" className="h-3 w-2"><path d="M0 0v12l8-6z" fill="#444" /></svg>
        </button>
        <span className="flex h-full w-2 items-center justify-center border border-[#8f949c] bg-[#f3f4f6]"><i className="h-3 w-px bg-[#666]" /></span>
      </div>
      <div className="w-[31px]" />
    </div>
  );
}

function TabSlant({ fill }: { fill: string }) {
  return (
    <svg viewBox="0 0 20 23" className="-mr-[5px] h-[23px] w-5 shrink-0" aria-hidden="true">
      <path d="M0 0h18L3 20c-1 2-2 2-3 2z" fill={fill} />
      <path d="M18 0L3 20c-1 2-2 2-3 2" fill="none" stroke="#9da2aa" strokeWidth="1.300" />
    </svg>
  );
}

function StatusBar() {
  return (
    <div className="flex h-8 items-center bg-linear-to-b from-[#dfe1e6] via-[#cdd0d5] to-[#bcc7c9] text-base text-[#4b4f55]">
      <span className="w-[73px] pl-3">Ready</span>
      <Sep dark className="h-7" />
      <Sep dark className="ml-auto h-7" />
      <button aria-label="Normal view" className="ml-[6px] rounded-sm border border-[#c29b2f] bg-[#ffe066] p-[3px]">
        <svg viewBox="0 0 20 20" className="size-5">
          <path d="M1 2h18v16H1zM7 2v16M13 2v16M1 7h18M1 13h18" fill="#fff" stroke="#55585f" strokeWidth="1.500" />
        </svg>
      </button>
      <button aria-label="Page Layout view" className="ml-[3px]">
        <svg viewBox="0 0 22 20" className="h-5 w-[22px]">
          <path d="M1 1h20v18H1z" fill="#c3c6cb" stroke="#55585f" strokeWidth="1.500" />
          <path d="M6 4h10v12H6z" fill="#fff" stroke="#55585f" />
          <path d="M8 7h6M8 10h6M8 13h6" stroke="#888" />
        </svg>
      </button>
      <button aria-label="Page Break view" className="ml-[6px]">
        <svg viewBox="0 0 22 20" className="h-5 w-[22px]">
          <path d="M1 1h20v18H1z" fill="#c3c6cb" stroke="#55585f" strokeWidth="1.500" />
          <path d="M2 2h5v10H2zM9 2h5v10H9z" fill="#fff" stroke="#55585f" />
        </svg>
      </button>
      <span className="ml-4 w-[53px]">100%</span>
      <button aria-label="Zoom out">
        <svg viewBox="0 0 24 24" className="size-6">
          <circle cx="12" cy="12" r="10.500" fill="#f4f5f7" stroke="#6b6f76" strokeWidth="1.500" />
          <path d="M6 12h12" stroke="#444" strokeWidth="2.500" />
        </svg>
      </button>
      <input
        type="range"
        aria-label="Zoom"
        defaultValue={50}
        className="mx-1 h-6 w-[142px] appearance-none bg-[linear-gradient(#7d8188,#7d8188)] bg-[length:100%_1px] bg-center bg-no-repeat [&::-webkit-slider-thumb]:h-[18px] [&::-webkit-slider-thumb]:w-3 [&::-webkit-slider-thumb]:appearance-none [&::-webkit-slider-thumb]:rounded-b-md [&::-webkit-slider-thumb]:border [&::-webkit-slider-thumb]:border-[#6b6f76] [&::-webkit-slider-thumb]:bg-[#f4f5f7]"
      />
      <button aria-label="Zoom in" className="mr-[7px]">
        <svg viewBox="0 0 24 24" className="size-6">
          <circle cx="12" cy="12" r="10.500" fill="#f4f5f7" stroke="#6b6f76" strokeWidth="1.500" />
          <path d="M6 12h12M12 6v12" stroke="#444" strokeWidth="2.500" />
        </svg>
      </button>
    </div>
  );
}

/* ---------- taskbar ---------- */

function TaskbarBackdrop() {
  return (
    <svg viewBox="0 0 2048 60" preserveAspectRatio="none" className="absolute inset-0 h-full w-full" aria-hidden="true">
      <defs>
        <filter id="blur" x="-5%" y="-50%" width="110%" height="200%">
          <feGaussianBlur stdDeviation="9 3" />
        </filter>
      </defs>
      <rect width="2048" height="60" fill="#8f0c12" />
      <g filter="url(#blur)">
        <path d="M50 -10h135v80H50z" fill="#a8492c" />
        <path d="M-20 -10h50v80H-20z" fill="#8b2024" />
        <path d="M250 -10h30l-20 80h-20z" fill="#a83a35" />
        <path d="M360 -10h40l-20 80h-30z" fill="#7a070c" />
        <path d="M540 -10h460v80H520z" fill="#a9362a" />
        <path d="M820 -10h90l-60 80h-30z" fill="#b8423a" />
        <path d="M890 -10h50l-20 80h-85z" fill="#c0604a" />
        <path d="M918 30l16 40h-30z" fill="#8a1a1c" />
        <path d="M930 -10h66v80h-60c-10-24-14-56-6-80z" fill="#c2702c" />
        <path d="M1000 -10h90l-10 80h-80z" fill="#930f18" />
        <path d="M1030 -10h50l70 80h-60z" fill="#b9483a" />
        <path d="M1080 -10h120l30 80h-90z" fill="#9a0a10" />
        <path d="M1185 -10h85l50 80h-120z" fill="#ba4524" />
        <path d="M1225 -10h20l40 80h-20z" fill="#c8652c" />
        <path d="M1280 -10h80l130 80h-190z" fill="#8d1824" />
        <path d="M1370 20l140 50h-130z" fill="#5c1a20" />
        <path d="M1340 -10h170v68c-70-4-120-30-170-68z" fill="#c3733f" />
        <path d="M1520 -10h90l60 80h-170z" fill="#b5441f" />
        <path d="M1600 -10h40l50 80h-40z" fill="#b9401f" />
        <path d="M1640 -10h80l70 80h-100z" fill="#5c070b" />
        <path d="M1710 -10h40l70 80h-30z" fill="#8a2c2e" />
        <path d="M1770 -10h300v80h-240z" fill="#741014" />
        <path d="M1980 -10h90v80h-70z" fill="#5f080b" />
      </g>
      <path d="M0 1h2048" stroke="#4d2a2e" strokeWidth="2" />
      <path d="M0 3h2048" stroke="#d98f86" strokeOpacity=".7" strokeWidth="1" />
    </svg>
  );
}

interface OfficeIconProps {
  letter: string;
  paper: string;
  ink: string;
  edge: string;
  children?: ReactNode;
}

function OfficeIcon({ letter, paper, ink, edge, children }: OfficeIconProps) {
  return (
    <svg viewBox="0 0 48 48" className="size-12">
      <path d="M2 14Q2 2 14 2h29v42H2z" fill="#fff" stroke={edge} strokeWidth="2" />
      <path d="M4 14Q4 4 14 4h27v20L4 32z" fill={paper} />
      <text x="17" y="32" textAnchor="middle" fontSize="32" fontWeight="800" fill={ink}>
        {letter}
      </text>
      {children}
    </svg>
  );
}

function Tile({ label, className, active, children }: { label: string; className: string; active?: boolean; children: ReactNode }) {
  return (
    <button
      aria-label={label}
      className={clsx(
        "flex h-[57px] items-center justify-center rounded-[4px] border border-white/60",
        active ? "bg-linear-to-b from-[#f3dcd6]/90 to-[#dc9080]/80" : "bg-radial-[at_20%_0%] from-white/60 to-white/10",
        className,
      )}
    >
      {children}
    </button>
  );
}

function Taskbar() {
  return (
    <footer className="relative h-[60px] overflow-hidden">
      <TaskbarBackdrop />
      <div className="relative flex h-full items-end pb-px">
        <button aria-label="Start" className="flex h-full w-20 items-center justify-center">
          <svg viewBox="0 0 56 56" className="size-14">
            <defs>
              <radialGradient id="orb" cx=".5" cy=".85" r=".8">
                <stop offset="0" stopColor="#3fd0f8" />
                <stop offset=".5" stopColor="#1d6fa8" />
                <stop offset="1" stopColor="#a9b6c2" />
              </radialGradient>
            </defs>
            <circle cx="28" cy="28" r="26" fill="url(#orb)" stroke="#5b3f45" strokeWidth="2" />
            <path d="M16 14c4-3 8-3 11-1l-3 12c-4-2-7-2-11 0z" fill="#e8552d" />
            <path d="M29 14c4 2 8 2 12 0l-3 12c-4 2-8 2-12 0z" fill="#8cc63f" />
            <path d="M12 28c4-3 8-3 11-1l-3 12c-4-2-7-2-11 0z" fill="#38a0e4" />
            <path d="M25 28c4 2 8 2 12 0l-3 12c-4 2-8 2-12 0z" fill="#fbc93d" />
          </svg>
        </button>
        <button aria-label="Chrome" className="flex h-full w-[103px] items-center justify-center pl-1">
          <svg viewBox="0 0 44 44" className="size-11">
            <circle cx="22" cy="22" r="21" fill="#fbd02f" />
            <path d="M22 22L3.800 11.500A21 21 0 0 1 40.200 11.500L40 13H22z" fill="#dd3427" />
            <path d="M3.800 11.500A21 21 0 0 0 22 43l9-16.500-9 4.500-8-5z" fill="#3a9e3f" />
            <circle cx="22" cy="22" r="9.500" fill="#eef3f8" />
            <circle cx="22" cy="22" r="7.500" fill="#3b78c4" />
          </svg>
        </button>
        <Tile label="Internet Explorer" className="w-[75px]">
          <svg viewBox="0 0 48 48" className="size-12">
            <path d="M38 30c-3 7-8 10-14 10a14.500 14.500 0 1 1 15-15H16" fill="none" stroke="#4bb9ee" strokeWidth="8" />
            <path d="M7 45C-2 38 12 14 30 5c9-4 14-2 12 4" fill="none" stroke="#f3b72c" strokeWidth="4" />
          </svg>
        </Tile>
        <span className="flex h-[57px] w-[18px] gap-1 pl-[2px]">
          <i className="w-1 rounded-r border-r border-white/40" />
          <i className="w-1 rounded-r border-r border-white/40" />
        </span>
        <Tile label="Windows Explorer" className="w-[87px]">
          <svg viewBox="0 0 50 46" className="h-[46px] w-[50px]">
            <path d="M3 3h14l3 5h27v33H3z" fill="#f0d77c" stroke="#c7a843" />
            <path d="M6 3h8v4H6z" fill="#4d9a4c" />
            <path d="M18 6h10v4H18zM31 9h12v4H31z" fill="#fff" />
            <path d="M18 6h4v3h-4z" fill="#b0396a" />
            <path d="M31 9h5v3h-5z" fill="#3f6fc4" />
            <path d="M3 13h44v28H3z" fill="#f8e7a4" />
            <path d="M9 45V29c0-3 2-4 4-4h25c3 0 4 1 4 4v16h-8V35H17v10z" fill="#8fcbe8" stroke="#5c9fc4" />
          </svg>
        </Tile>
        <button aria-label="Media Player" className="flex h-full w-[98px] items-center justify-center">
          <svg viewBox="0 0 42 40" className="h-10 w-[42px]">
            <path d="M12 1h28v36H12z" fill="#7fb2dd" stroke="#3f78ad" />
            <path d="M1 3h33v36H1z" fill="#a3c9e8" stroke="#5e93c0" />
            <circle cx="17" cy="21" r="14" fill="#e3702a" stroke="#f5b07a" />
            <path d="M12 12v18l14-9z" fill="#fff" />
          </svg>
        </button>
        <div className="flex gap-[5px]">
          <Tile label="Outlook" className="w-[88px]">
            <OfficeIcon letter="O" paper="#fbd65c" ink="#e08a1a" edge="#f0b93a">
              <circle cx="37" cy="21" r="7" fill="#fff6dc" stroke="#d8962c" strokeWidth="1.500" />
              <path d="M37 17v4l3 1" fill="none" stroke="#8a5a14" strokeWidth="1.500" />
              <path d="M26 30h21v17H26z" fill="#fbe796" stroke="#c79a35" />
              <path d="M26 30l10 9 11-9" fill="none" stroke="#a47a25" />
            </OfficeIcon>
          </Tile>
          <Tile label="Word" className="w-[88px]">
            <OfficeIcon letter="W" paper="#9fc3ef" ink="#1f55a8" edge="#3c5f9c">
              <path d="M26 30l18-2-1 18-17-2z" fill="#fff" stroke="#9aa9cc" />
              <path d="M29 37l10 2M29 41l10 1" stroke="#a98fc9" />
            </OfficeIcon>
          </Tile>
          <Tile label="PowerPoint" className="w-[88px]">
            <OfficeIcon letter="P" paper="#f5b58c" ink="#d2451e" edge="#e2663a">
              <path d="M22 26l24-3-2 21-22-2z" fill="#fff" stroke="#e0a48a" />
              <circle cx="33" cy="31" r="6" fill="#e2603a" />
              <path d="M24 39l12 2" stroke="#555" />
            </OfficeIcon>
          </Tile>
          <Tile label="Excel" className="w-[88px]" active>
            <OfficeIcon letter="X" paper="#a9dba6" ink="#2f7d3a" edge="#3c7f4a">
              <path d="M25 27l20-2-2 20-20-3z" fill="#fff" stroke="#8fb79a" />
              <path d="M29 31h5M36 31h5M29 36h5M36 36h5M29 40h10" stroke="#3c7f4a" strokeWidth="1.500" />
            </OfficeIcon>
          </Tile>
        </div>
        <div className="ml-auto flex h-full items-center text-base text-white">
          <button aria-label="Show hidden icons">
            <svg viewBox="0 0 12 8" className="h-2 w-3"><path d="M0 8h12L6 0z" fill="#f5e9e9" /></svg>
          </button>
          <svg viewBox="0 0 22 24" className="ml-5 h-6 w-[22px]">
            <path d="M2 1v22" stroke="#f1e6dc" strokeWidth="2" />
            <path d="M3 2h9l1 2h6v10H3z" fill="#fff" />
            <circle cx="15" cy="17" r="7" fill="#cf2c2c" />
            <path d="M12 13l6 8M18 13l-6 8" stroke="#fff" strokeWidth="2" />
          </svg>
          <svg viewBox="0 0 22 24" className="ml-[13px] h-6 w-[22px]" fill="none" stroke="#fff" strokeWidth="2">
            <path d="M10 3H3v19h11v-3" />
            <path d="M5 1h5v3H5z" fill="#fff" />
            <path d="M10 8h11v5c0 4-11 4-11 0z" fill="#fff" strokeWidth="1" />
            <path d="M13 3v5M18 3v5M16 15v5" />
          </svg>
          <svg viewBox="0 0 22 20" className="ml-4 h-5 w-[22px]" fill="#fff">
            <path d="M0 16h3v3H0zM5 14h3v5H5zM10 10h3v9h-3zM15 6h3v13h-3z" />
            <path d="M19.500 2h2v17h-2z" opacity=".5" />
          </svg>
          <svg viewBox="0 0 20 24" className="ml-4 h-6 w-5">
            <path d="M1 8h4l6-6v20l-6-6H1z" fill="#fff" />
            <path d="M14 7c3 3 3 7 0 10" fill="none" stroke="#fff" strokeWidth="1.500" />
          </svg>
          <div className="ml-[22px] w-[84px] pt-[3px] text-center leading-[26px]">
            <div>1:45 PM</div>
            <div>8/25/2014</div>
          </div>
          <button aria-label="Show desktop" className="mr-[2px] ml-[13px] h-[57px] w-8 border border-white/40 bg-linear-to-b from-white/30 to-transparent" />
        </div>
      </div>
    </footer>
  );
}

export default function App() {
  return (
    <main className="relative min-h-screen overflow-hidden bg-[#fefefe] pt-[129px] font-['Open_Sans','Noto_Sans',sans-serif]">
      <SlideStrip />
      <div className="relative">
        <div className="bg-linear-to-b from-[#ecedf0] to-[#dfe1e7]">
          <TitleBar />
          <TabBar />
        </div>
        <Ribbon />
        <FormulaBar />
        <SheetArea />
        <SheetTabs />
        <StatusBar />
        <Taskbar />
      </div>
      <p className="relative pt-11 pl-[123px] font-['Liberation_Sans',sans-serif] text-[57px] leading-[68px] text-[#562114] [text-shadow:1px_3px_4px_rgba(0,0,0,0.35)]">
        Click <b>Enter</b>
        <br />
        Notice the Total
      </p>
    </main>
  );
}
